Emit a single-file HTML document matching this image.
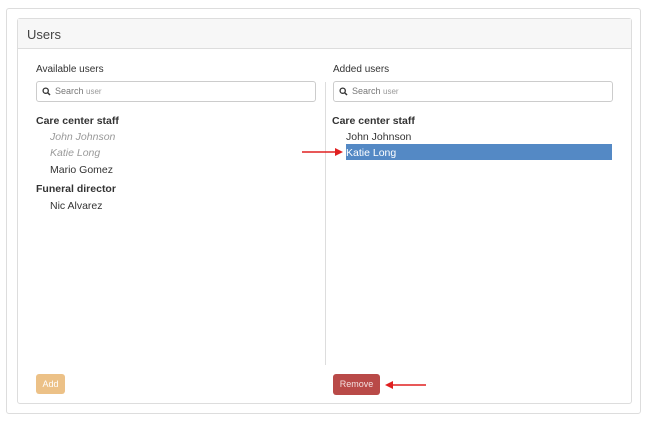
<!DOCTYPE html>
<html><head><style>
body{margin:0;width:648px;height:425px;background:#fff;font-family:"Liberation Sans",sans-serif;position:relative;overflow:hidden;color:#333}
.a{position:absolute}
.outer{left:6px;top:8px;width:635px;height:406px;border:1px solid #ddd;border-radius:3px;box-sizing:border-box}
.inner{left:17px;top:18px;width:615px;height:386px;border:1px solid #ddd;border-radius:3px;box-sizing:border-box}
.hdr{left:18px;top:19px;width:613px;height:29px;background:#f7f7f7;border-bottom:1px solid #ddd}
.search{height:21px;border:1px solid #ccc;border-radius:3px;box-sizing:border-box;font-size:9px;color:#777;line-height:19px;padding-left:18px}
.search small{font-size:8px;color:#999}
.lbl{font-size:10px;color:#333}
.grp{font-size:10.5px;font-weight:bold;color:#333}
.it{font-size:10.5px;color:#333}
.dim{font-style:italic;color:#999}
</style></head><body>
<div class="a outer"></div>
<div class="a inner"></div>
<div class="a hdr"></div>
<div class="a" style="left:27px;top:27px;font-size:13px;color:#444">Users</div>

<div class="a lbl" style="left:36px;top:64px">Available users</div>
<div class="a search" style="left:36px;top:81px;width:280px">Search <small>user</small></div>
<svg class="a" style="left:42px;top:87px" width="9" height="9" viewBox="0 0 9 9"><circle cx="3.7" cy="3.7" r="2.6" fill="none" stroke="#333" stroke-width="1.3"/><path d="M5.6 5.6L8 8" stroke="#333" stroke-width="1.5"/></svg>
<div class="a grp" style="left:36px;top:115px">Care center staff</div>
<div class="a it dim" style="left:50px;top:131px">John Johnson</div>
<div class="a it dim" style="left:50px;top:147px">Katie Long</div>
<div class="a it" style="left:50px;top:164px">Mario Gomez</div>
<div class="a grp" style="left:36px;top:183px">Funeral director</div>
<div class="a it" style="left:50px;top:200px">Nic Alvarez</div>

<div class="a" style="left:325px;top:82px;width:1px;height:283px;background:#ddd"></div>

<div class="a lbl" style="left:333px;top:64px">Added users</div>
<div class="a search" style="left:333px;top:81px;width:280px">Search <small>user</small></div>
<svg class="a" style="left:339px;top:87px" width="9" height="9" viewBox="0 0 9 9"><circle cx="3.7" cy="3.7" r="2.6" fill="none" stroke="#333" stroke-width="1.3"/><path d="M5.6 5.6L8 8" stroke="#333" stroke-width="1.5"/></svg>
<div class="a grp" style="left:332px;top:115px">Care center staff</div>
<div class="a it" style="left:346px;top:131px">John Johnson</div>
<div class="a" style="left:346px;top:144px;width:266px;height:16px;background:#5489c5"></div>
<div class="a it" style="left:346px;top:147px;color:#fff">Katie Long</div>

<svg class="a" style="left:300px;top:146px" width="46" height="12"><path d="M2 6H36" stroke="#e02020" stroke-width="1.5"/><path d="M35 2L43 6L35 10Z" fill="#e02020"/></svg>

<div class="a" style="left:36px;top:374px;width:29px;height:20px;background:#ecc187;border-radius:3px;color:#fff;font-size:9px;line-height:20px;text-align:center">Add</div>
<div class="a" style="left:333px;top:374px;width:47px;height:21px;background:#b94a48;border-radius:3px;color:#f4e0e0;font-size:9px;line-height:21px;text-align:center">Remove</div>
<svg class="a" style="left:382px;top:379px" width="46" height="12"><path d="M10 6H44" stroke="#e02020" stroke-width="1.5"/><path d="M11 2L3 6L11 10Z" fill="#e02020"/></svg>
</body></html>
